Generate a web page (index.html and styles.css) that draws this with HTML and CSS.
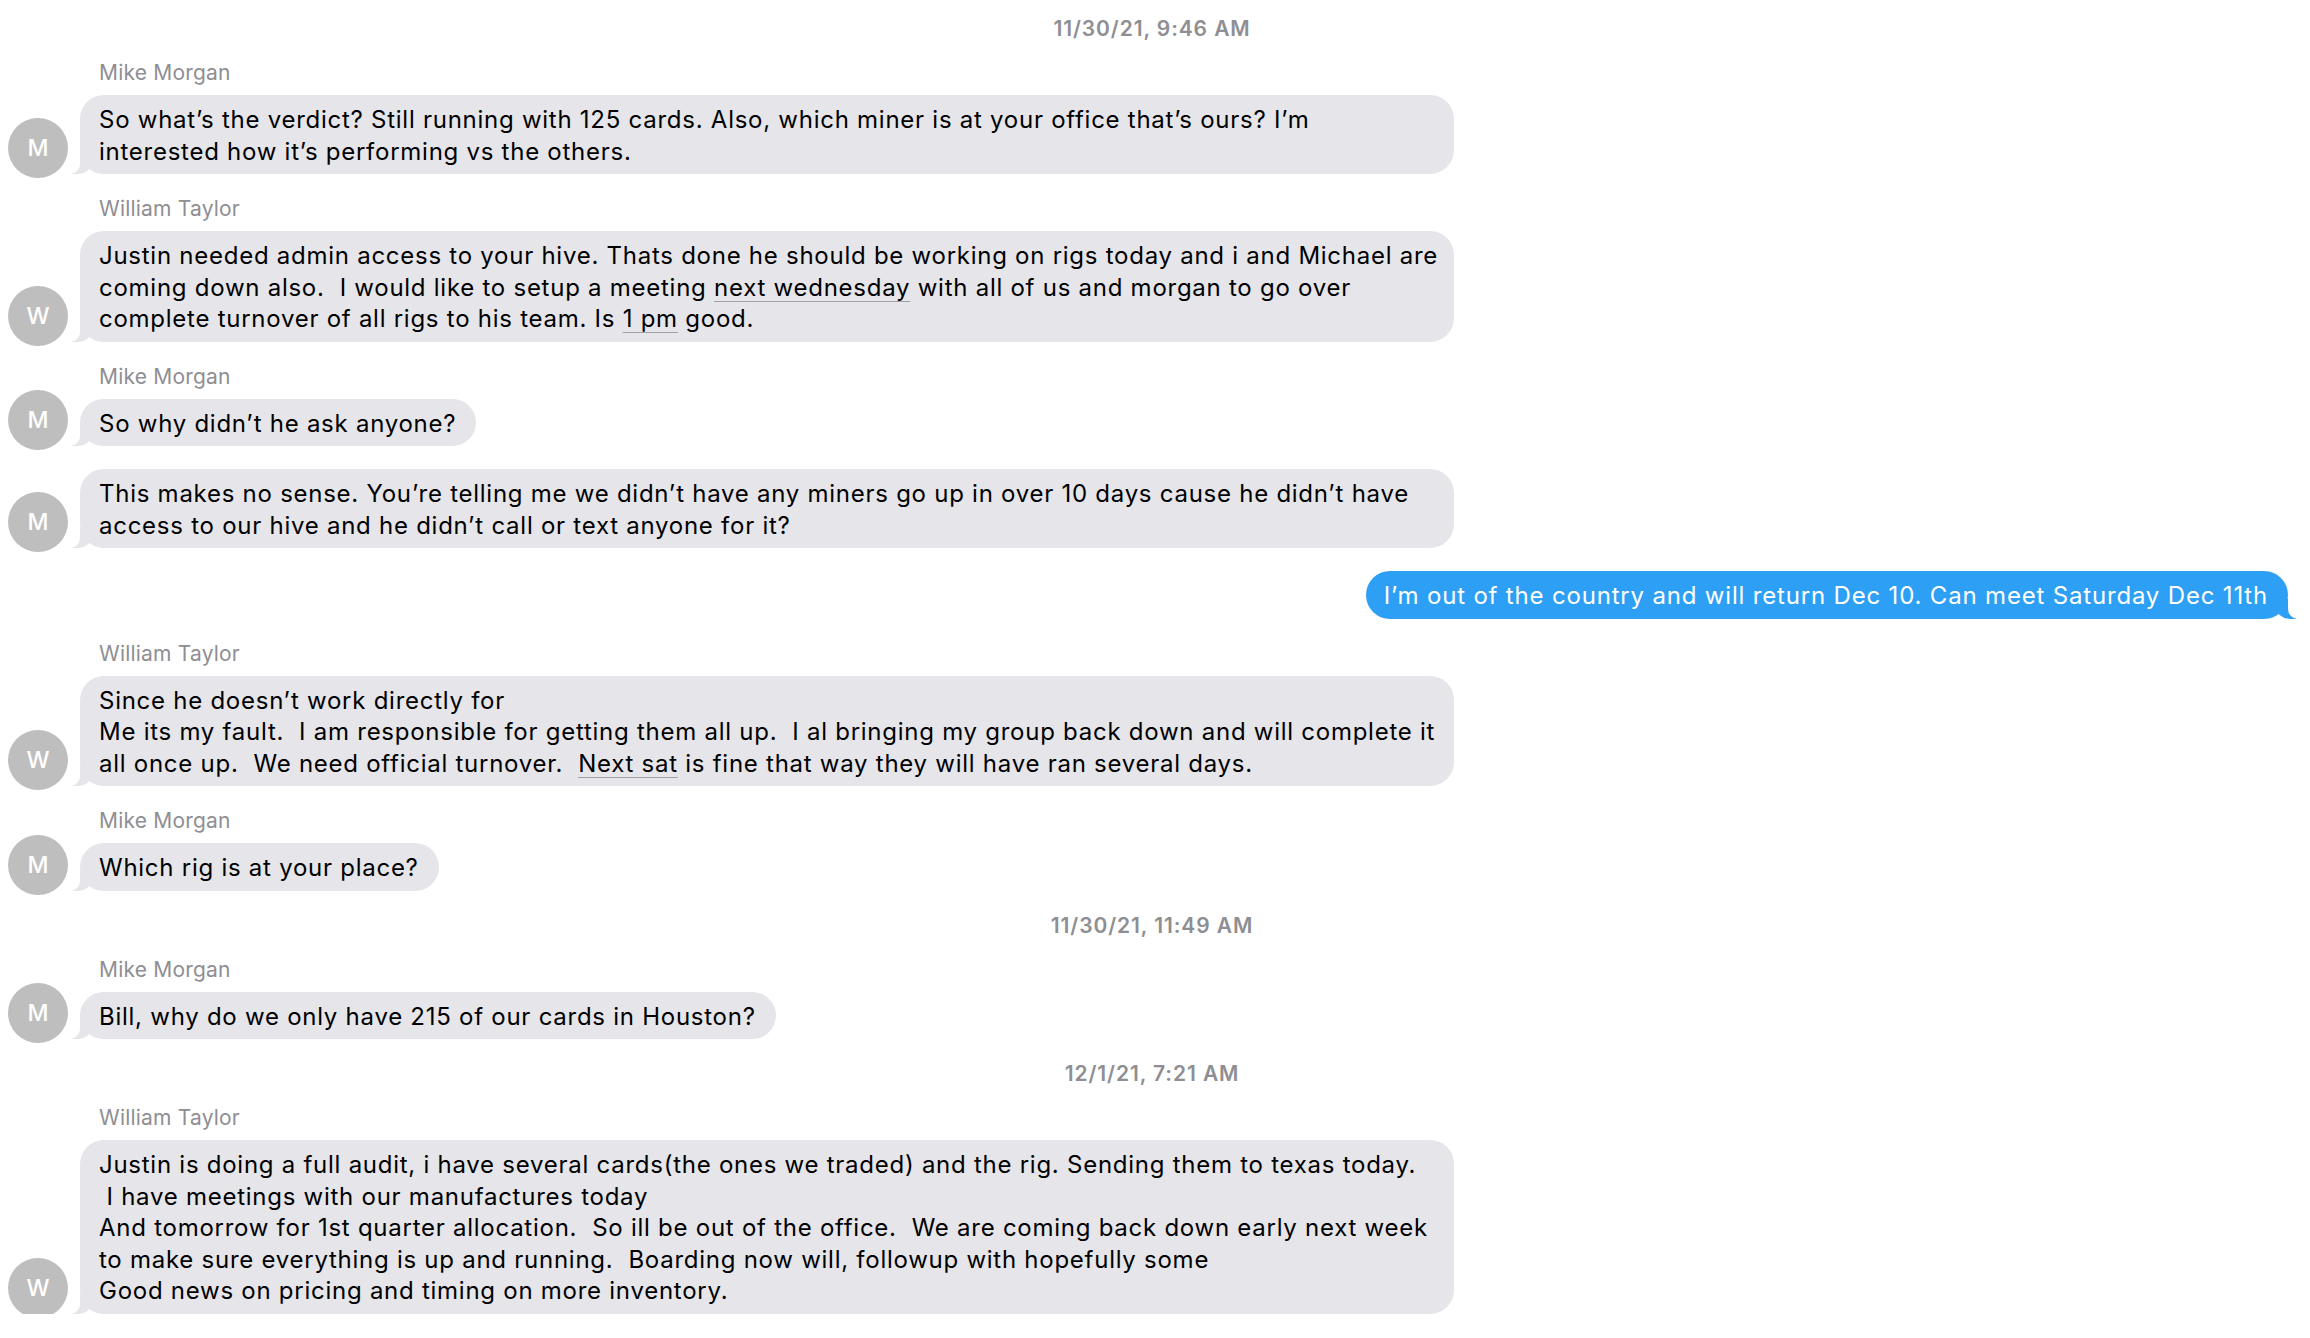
FILE: index.html
```html
<!DOCTYPE html>
<html lang="en">
<head>
  <meta charset="UTF-8">
  <title>Messages</title>
  <link rel="stylesheet" href="styles.css">
</head>
<body>

  <div class="thread">
    <div class="stamp">11/30/21, 9:46 AM</div>

    <div class="msg">
      <div class="sender">Mike Morgan</div>
      <div class="row">
        <div class="avatar">M</div>
        <div class="bubble wide">So what’s the verdict? Still running with 125 cards. Also, which miner is at your office that’s ours? I’m<br>interested how it’s performing vs the others.</div>
      </div>
    </div>

    <div class="msg">
      <div class="sender">William Taylor</div>
      <div class="row">
        <div class="avatar">W</div>
        <div class="bubble wide">Justin needed admin access to your hive. Thats done he should be working on rigs today and i and Michael are<br>coming down also. &nbsp;I would like to setup a meeting <span class="link">next wednesday</span> with all of us and morgan to go over<br>complete turnover of all rigs to his team. Is <span class="link">1 pm</span> good.</div>
      </div>
    </div>

    <div class="msg">
      <div class="sender">Mike Morgan</div>
      <div class="row">
        <div class="avatar">M</div>
        <div class="bubble">So why didn’t he ask anyone?</div>
      </div>
    </div>

    <div class="msg cont">
      <div class="row">
        <div class="avatar">M</div>
        <div class="bubble wide">This makes no sense. You’re telling me we didn’t have any miners go up in over 10 days cause he didn’t have<br>access to our hive and he didn’t call or text anyone for it?</div>
      </div>
    </div>

    <div class="msg mine">
      <div class="bubble">I’m out of the country and will return Dec 10. Can meet Saturday Dec 11th</div>
    </div>

    <div class="msg">
      <div class="sender">William Taylor</div>
      <div class="row">
        <div class="avatar">W</div>
        <div class="bubble wide">Since he doesn’t work directly for<br>Me its my fault. &nbsp;I am responsible for getting them all up. &nbsp;I al bringing my group back down and will complete it<br>all once up. &nbsp;We need official turnover. &nbsp;<span class="link">Next sat</span> is fine that way they will have ran several days.</div>
      </div>
    </div>

    <div class="msg">
      <div class="sender">Mike Morgan</div>
      <div class="row">
        <div class="avatar">M</div>
        <div class="bubble">Which rig is at your place?</div>
      </div>
    </div>

    <div class="stamp">11/30/21, 11:49 AM</div>

    <div class="msg">
      <div class="sender">Mike Morgan</div>
      <div class="row">
        <div class="avatar">M</div>
        <div class="bubble">Bill, why do we only have 215 of our cards in Houston?</div>
      </div>
    </div>

    <div class="stamp">12/1/21, 7:21 AM</div>

    <div class="msg">
      <div class="sender">William Taylor</div>
      <div class="row">
        <div class="avatar">W</div>
        <div class="bubble wide">Justin is doing a full audit, i have several cards(the ones we traded) and the rig. Sending them to texas today.<br>&nbsp;I have meetings with our manufactures today<br>And tomorrow for 1st quarter allocation. &nbsp;So ill be out of the office. &nbsp;We are coming back down early next week<br>to make sure everything is up and running. &nbsp;Boarding now will, followup with hopefully some<br>Good news on pricing and timing on more inventory.</div>
      </div>
    </div>
  </div>

</body>
</html>
```

FILE: styles.css
```css
body {
  margin: 0;
  background-color: #ffffff;
  color: #000000;
  font-family: Inter, "Liberation Sans", sans-serif;
}

.thread {
  padding: 16px 22px 0 8px;
}

/* date separators */
.stamp {
  margin-top: 22px;
  padding-left: 8px;
  line-height: 25px;
  font-size: 21px;
  font-weight: 600;
  letter-spacing: 0.9px;
  color: #8e8e93;
  text-align: center;
}

.stamp:first-child {
  margin-top: 0;
}

.msg {
  margin-top: 22px;
}

.msg.cont, .msg.mine {
  margin-top: 23px;
}

.stamp + .msg {
  margin-top: 19px;
}

.sender {
  padding-left: 91px;
  margin-bottom: 10px;
  line-height: 25px;
  font-size: 21px;
  letter-spacing: 0.2px;
  color: #8e8e93;
}

.row {
  display: flex;
  align-items: flex-end;
  gap: 12px;
}

.avatar {
  flex: none;
  width: 60px;
  height: 60px;
  margin-top: -30px;
  margin-bottom: -4px;
  border-radius: 50%;
  background-color: #bebebe;
  color: #ffffff;
  font-size: 23px;
  font-weight: 500;
  display: flex;
  align-items: center;
  justify-content: center;
}

.bubble {
  position: relative;
  padding: 9px 20px 7px 19px;
  border-radius: 24px;
  background-color: #e5e5ea;
  font-size: 24px;
  line-height: 31.5px;
  letter-spacing: 0.74px;
  white-space: nowrap;
}

.bubble.wide {
  box-sizing: border-box;
  width: 1374px;
}

/* bubble tail: a coloured hook plus a white mask that carves the curve */
.bubble::before,
.bubble::after {
  content: "";
  position: absolute;
  bottom: 0;
  height: 20px;
}

.bubble::before {
  left: -8px;
  width: 21px;
  background-color: #e5e5ea;
  border-bottom-right-radius: 16px 14px;
}

.bubble::after {
  left: -10px;
  width: 10px;
  background-color: #ffffff;
  border-bottom-right-radius: 10px;
}

.mine {
  display: flex;
  justify-content: flex-end;
}

.mine .bubble {
  padding: 9px 20px 7px 18px;
  background-color: #2d9ff4;
  color: #ffffff;
  letter-spacing: 0.82px;
}

.mine .bubble::before {
  left: auto;
  right: -8px;
  background-color: #2d9ff4;
  border-bottom-right-radius: 0;
  border-bottom-left-radius: 16px 14px;
}

.mine .bubble::after {
  left: auto;
  right: -10px;
  border-bottom-right-radius: 0;
  border-bottom-left-radius: 10px;
}

.link {
  text-decoration: underline;
  text-decoration-color: #a1a1a6;
  text-decoration-thickness: 1px;
  text-underline-offset: 5px;
}
```
